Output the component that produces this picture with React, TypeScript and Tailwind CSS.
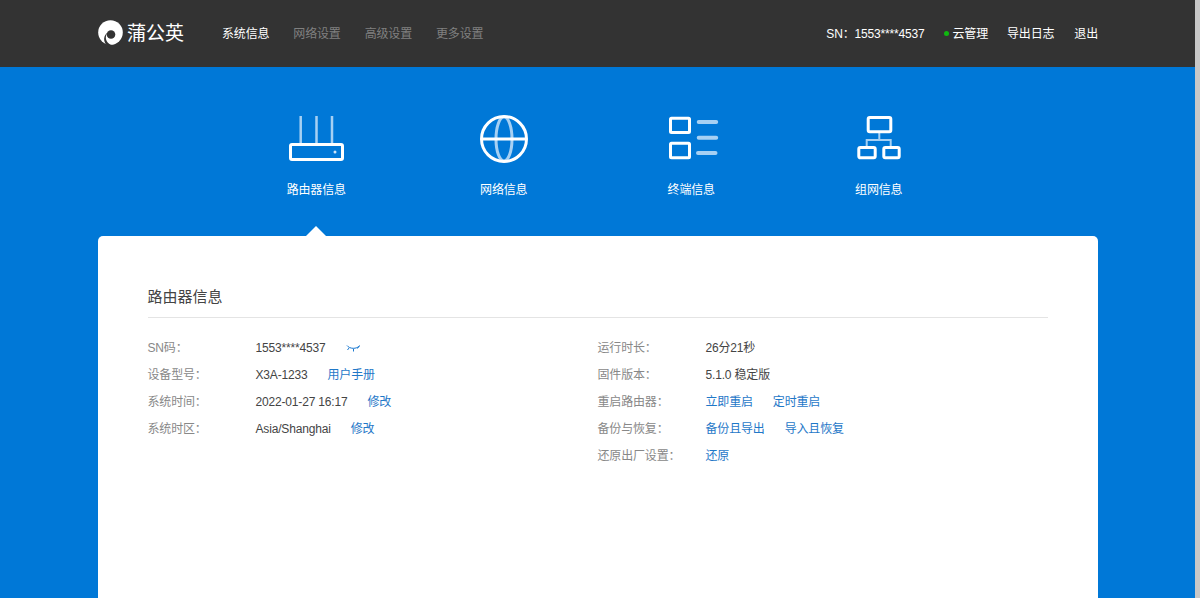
import React from "react";

const font = { fontFamily: '"Liberation Sans", "Noto Sans CJK SC", sans-serif' };

function Logo() {
  return (
    <svg width="25" height="25" viewBox="0 0 25 25" className="mb-[2px] shrink-0">
      <circle cx="12.500" cy="12.500" r="12.300" fill="#fff" />
      <circle cx="13" cy="14.500" r="4.300" fill="#333" />
      <path d="M9.500 12.500 C6.500 17 7.500 22 13 25 L8.500 25 C5 21 5.500 15.500 9.500 12.500 Z" fill="#333" />
    </svg>
  );
}

function RouterIcon() {
  return (
    <svg width="56" height="48" viewBox="0 0 56 48" fill="none">
      <g stroke="#a6d0f3" strokeWidth="2.500">
        <path d="M12.700 1v28M28.500 1v28M44 1v28" />
      </g>
      <rect x="2.500" y="29.500" width="52" height="15" rx="1.500" stroke="#fff" strokeWidth="3" />
      <circle cx="47" cy="37" r="1.500" fill="#cfe5f8" />
    </svg>
  );
}

function GlobeIcon() {
  return (
    <svg width="50" height="50" viewBox="0 0 50 50" fill="none">
      <ellipse cx="25" cy="25" rx="8" ry="22" stroke="#a6d0f3" strokeWidth="3" />
      <path d="M2 25h46" stroke="#fff" strokeWidth="3" />
      <circle cx="25" cy="25" r="22.500" stroke="#fff" strokeWidth="3" />
    </svg>
  );
}

function ListIcon() {
  return (
    <svg width="56" height="46" viewBox="0 0 56 46" fill="none">
      <rect x="7.500" y="2.200" width="19" height="14.300" rx="1" stroke="#fff" strokeWidth="3" />
      <rect x="7.500" y="27.200" width="19" height="14.600" rx="1" stroke="#fff" strokeWidth="3" />
      <g stroke="#a6d0f3" strokeWidth="4" strokeLinecap="round">
        <path d="M35.700 6h17.500M35.700 21.700h17.500M35 37h17.500" />
      </g>
    </svg>
  );
}

function NetIcon() {
  return (
    <svg width="46" height="46" viewBox="0 0 46 46" fill="none">
      <g stroke="#a6d0f3" strokeWidth="2">
        <path d="M23.300 17v7M10.700 30v-6h24v6" />
      </g>
      <rect x="12.200" y="1.500" width="22.600" height="14.300" rx="1.500" stroke="#fff" strokeWidth="3" />
      <rect x="2.800" y="31.500" width="16.400" height="10.300" rx="1.500" stroke="#fff" strokeWidth="3" />
      <rect x="27.800" y="31.500" width="15.400" height="10.300" rx="1.500" stroke="#fff" strokeWidth="3" />
    </svg>
  );
}

function EyeClosed() {
  return (
    <svg width="15" height="8" viewBox="0 0 15 8" fill="none" stroke="#1a78d0" strokeWidth="1">
      <path d="M1 1.500C3.500 5 10.500 5.500 14 1.500M3 4L1.500 6M7.500 5v2.500M11.500 4.500L13 2" />
    </svg>
  );
}

const items = [
  { icon: <RouterIcon />, label: "路由器信息" },
  { icon: <GlobeIcon />, label: "网络信息" },
  { icon: <ListIcon />, label: "终端信息" },
  { icon: <NetIcon />, label: "组网信息" },
];

function Row({ label, children }: { label: string; children: React.ReactNode }) {
  return (
    <div className="flex h-[27px] items-center text-xs tracking-[-0.17px]">
      <div className="w-[108px] shrink-0 text-[#888]">{label}</div>
      <div className="flex items-center text-[#444]">{children}</div>
    </div>
  );
}

function A({ children, className = "" }: { children: React.ReactNode; className?: string }) {
  return <a className={"text-[#1f78c8] " + className}>{children}</a>;
}

export default function App() {
  return (
    <div className="flex h-[598px] overflow-hidden" style={font}>
      <div className="min-w-0 flex-1 bg-[#0078d7]">
        <header className="flex h-[67px] items-center justify-between bg-[#333] pl-[98px] pr-[97px] text-xs tracking-[-0.17px]">
          <div className="flex items-center">
            <Logo />
            <span className="ml-[4px] w-[95px] text-[19px] leading-none tracking-normal text-white">蒲公英</span>
            <nav className="flex gap-6 text-[#808080]">
              <span className="text-white">系统信息</span>
              <span>网络设置</span>
              <span>高级设置</span>
              <span>更多设置</span>
            </nav>
          </div>
          <div className="flex items-center text-white">
            <span>SN：1553****4537</span>
            <span className="ml-[19px] mr-[4px] h-[5px] w-[5px] rounded-full bg-[#0fb80f]" />
            <span>云管理</span>
            <span className="ml-[19px]">导出日志</span>
            <span className="ml-[20px]">退出</span>
          </div>
        </header>

        <div className="mx-auto flex h-[169px] w-[750px]">
          {items.map((it, i) => (
            <div key={it.label} className="relative flex w-[187.5px] flex-col items-center">
              <div className="mt-[47px] flex h-[50px] items-center justify-center">{it.icon}</div>
              <div className="mt-[18px] text-xs leading-[16px] tracking-[-0.17px] text-white">{it.label}</div>
              {i === 0 && (
                <div className="absolute bottom-0 h-0 w-0 border-x-[10px] border-b-[10px] border-x-transparent border-b-white" />
              )}
            </div>
          ))}
        </div>

        <main className="mx-auto h-[400px] w-[1000px] rounded-t-[5px] bg-white px-[50px] pt-[50px]">
          <h2 className="h-[32px] border-b border-[#e4e4e4] text-[15px] leading-[22px] text-[#444]">路由器信息</h2>
          <div className="mt-4 grid grid-cols-2">
            <div>
              <Row label="SN码：">
                <span>1553****4537</span>
                <span className="ml-[20px] flex"><EyeClosed /></span>
              </Row>
              <Row label="设备型号：">
                <span>X3A-1233</span>
                <A className="ml-[20px]">用户手册</A>
              </Row>
              <Row label="系统时间：">
                <span>2022-01-27 16:17</span>
                <A className="ml-[20px]">修改</A>
              </Row>
              <Row label="系统时区：">
                <span>Asia/Shanghai</span>
                <A className="ml-[20px]">修改</A>
              </Row>
            </div>
            <div>
              <Row label="运行时长："><span>26分21秒</span></Row>
              <Row label="固件版本："><span>5.1.0 稳定版</span></Row>
              <Row label="重启路由器：">
                <A>立即重启</A>
                <A className="ml-[20px]">定时重启</A>
              </Row>
              <Row label="备份与恢复：">
                <A>备份且导出</A>
                <A className="ml-[20px]">导入且恢复</A>
              </Row>
              <Row label="还原出厂设置："><A>还原</A></Row>
            </div>
          </div>
        </main>
      </div>
      <div className="w-[5px] shrink-0 bg-[#c8c8c8]" />
    </div>
  );
}
